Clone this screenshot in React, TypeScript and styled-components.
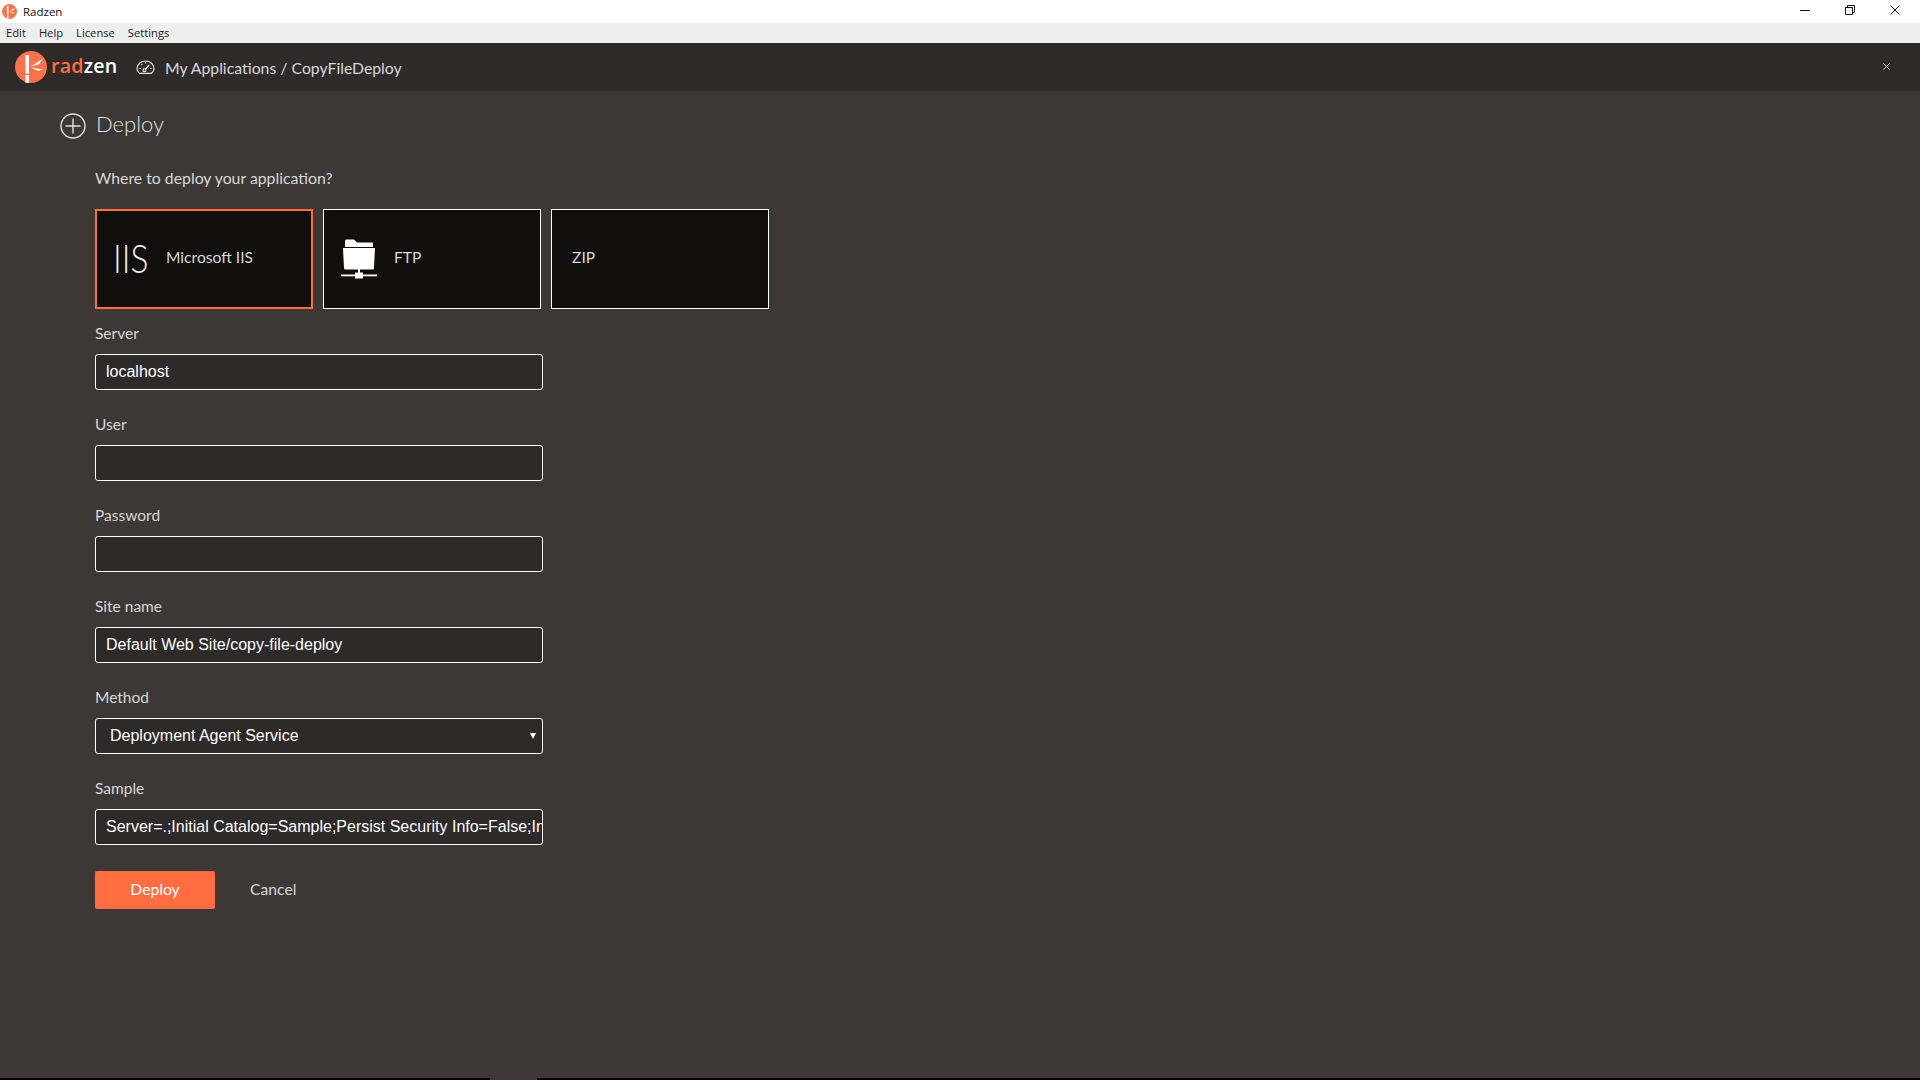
import React from "react";
import styled, { createGlobalStyle } from "styled-components";

const GlobalStyle = createGlobalStyle`
  html, body { margin: 0; padding: 0; height: 100%; background: #3d3735; }
  * { box-sizing: border-box; }
`;

const Shell = styled.div`
  width: 1920px;
  height: 1080px;
  display: flex;
  flex-direction: column;
  overflow: hidden;
  background: #3d3735;
  font-family: Lato, "Open Sans", sans-serif;
`;

const TitleBar = styled.div`
  height: 23px;
  flex: none;
  display: flex;
  align-items: center;
  padding-left: 2px;
  background: #fff;
  color: #111;
  font: 11.5px "Open Sans", sans-serif;
`;

const AppName = styled.span`
  margin-left: 6px;
`;

const WindowButtons = styled.div`
  margin-left: auto;
  margin-right: 3px;
  margin-bottom: 3px;
  display: flex;
`;

const WindowButton = styled.div`
  width: 45px;
  height: 20px;
  display: flex;
  align-items: center;
  justify-content: center;
`;

const MenuBar = styled.div`
  height: 20px;
  flex: none;
  display: flex;
  align-items: center;
  gap: 13px;
  padding: 0 0 2px 6px;
  background: #eeeeee;
  color: #222;
  font: 11.2px "Open Sans", sans-serif;
`;

const Header = styled.div`
  height: 48px;
  flex: none;
  display: flex;
  align-items: center;
  padding: 0 0 0 15px;
  background: #2e2a2a;
`;

const LogoWord = styled.div`
  margin-left: 4px;
  padding-bottom: 2px;
  font: 600 19.6px/1 "Open Sans", sans-serif;
  letter-spacing: 0.2px;
  color: #fff;
  width: 85px;
`;

const LogoAccent = styled.span`
  color: #ff6d41;
`;

const Breadcrumb = styled.div`
  margin-left: 10px;
  color: #d8d8d8;
  font-size: 15.8px;
`;

const HeaderClose = styled.div`
  margin-left: auto;
  margin-right: 30px;
  margin-bottom: 2px;
  display: flex;
`;

const Main = styled.div`
  flex: 1;
  display: flex;
  flex-direction: column;
  padding: 21px 0 0 60px;
  color: #d8d8d8;
`;

const PageTitle = styled.div`
  display: flex;
  align-items: center;
  gap: 10px;
  height: 28px;
  font-size: 22px;
  line-height: 24px;
  font-weight: 300;
  color: #e2e2e2;
`;

const TitleText = styled.span`
  margin-top: -5px;
`;

const Content = styled.div`
  padding-left: 35px;
`;

const Question = styled.div`
  margin-top: 28px;
  font-size: 15.8px;
  line-height: 20px;
`;

const Targets = styled.div`
  display: flex;
  gap: 10px;
  margin-top: 21px;
`;

const Target = styled.div<{ $active?: boolean; $plain?: boolean }>`
  width: 218px;
  height: 100px;
  display: flex;
  align-items: center;
  gap: 17px;
  padding-left: ${(p) => (p.$active ? "16px" : p.$plain ? "20px" : "18px")};
  padding-bottom: 5px;
  background: #100f0e;
  border: ${(p) => (p.$active ? "2px solid #ff6d41" : "1px solid #fff")};
  color: #d8d8d8;
  font-size: 15.6px;
`;

const IisMark = styled.span`
  display: block;
  width: 36px;
  margin-top: 3px;
  font: 300 39px/1 Lato, sans-serif;
  color: #eee;
  transform: scaleX(0.86);
  transform-origin: left center;
  white-space: nowrap;
`;

const Field = styled.div`
  display: flex;
  flex-direction: column;
  width: 448px;
  margin-top: 14px;
  & + & {
    margin-top: 24px;
  }
`;

const FieldLabel = styled.label`
  font-size: 15.5px;
  line-height: 20px;
  margin-bottom: 11px;
`;

const TextInput = styled.input`
  width: 448px;
  height: 36px;
  padding: 0 0 0 10px;
  border: 1px solid #fff;
  border-radius: 3px;
  background: #2e2a2a;
  color: #fff;
  font: 16px "Liberation Sans", Arial, sans-serif;
  outline: none;
`;

const SelectBox = styled.div`
  position: relative;
  height: 36px;
  display: flex;
  align-items: center;
  padding-left: 14px;
  border: 1px solid #fff;
  border-radius: 3px;
  background: #2e2a2a;
  color: #fff;
  font: 16px "Liberation Sans", Arial, sans-serif;
`;

const Caret = styled.span`
  position: absolute;
  right: 6px;
  top: 14px;
  width: 0;
  height: 0;
  border-left: 3px solid transparent;
  border-right: 3px solid transparent;
  border-top: 6px solid #fff;
`;

const Actions = styled.div`
  display: flex;
  align-items: center;
  margin-top: 26px;
`;

const PrimaryButton = styled.button`
  width: 120px;
  height: 38px;
  padding: 0 0 2px;
  border: none;
  border-radius: 2px;
  background: #ff6d41;
  color: #fff;
  font: 15.7px Lato, sans-serif;
`;

const LinkButton = styled.button`
  margin-left: 35px;
  padding: 0 0 2px;
  border: none;
  background: none;
  color: #d8d8d8;
  font: 15.7px Lato, sans-serif;
`;

const BottomEdge = styled.div`
  height: 2px;
  flex: none;
  display: flex;
`;

const EdgeSegment = styled.div<{ $width?: number }>`
  background: #050505;
  flex: ${(p) => (p.$width ? `0 0 ${p.$width}px` : "1")};
`;

const EdgeGap = styled.div`
  flex: 0 0 47px;
  background: #3d3735;
`;

function RadzenMark({ size }: { size: number }) {
  return (
    <svg width={size} height={size} viewBox="0 0 32 32" style={{ flex: "none" }}>
      <circle cx="16" cy="16" r="16" fill="#ff7148" />
      <rect x="10.4" y="4" width="3.6" height="18.6" fill="#fff" />
      <rect x="10.4" y="24" width="3.6" height="7.8" fill="#fff" />
      <path d="M15.8 15.6 L28 7.6 L24 13.2 Z" fill="#fff" />
      <path d="M15.8 16.4 L28 18.4 L23 20 Z" fill="#fff" />
    </svg>
  );
}

function Gauge() {
  return (
    <svg width="19" height="17" viewBox="0 0 19 17" fill="none" stroke="#e8e8e8" strokeWidth="1.2" style={{ flex: "none" }}>
      <path d="M3.6 14.4 H5.6 M13.4 14.4 H15.4 Q18 12.5 18 9.5 A8.5 7.5 0 0 0 1 9.5 Q1 12.5 3.6 14.4 Z" strokeLinejoin="round" />
      <circle cx="8.5" cy="11.2" r="1.5" />
      <path d="M9.6 10 L13.2 6 M3.4 9.5 H4.8 M5.2 5.2 L6.2 6.2 M9.5 3 V4.4 M14.2 9.5 H15.6" />
    </svg>
  );
}

function PlusCircle() {
  return (
    <svg width="26" height="26" viewBox="0 0 26 26" fill="none" stroke="#e2e2e2" strokeWidth="1.4">
      <circle cx="13" cy="13" r="12" />
      <path d="M13 5.5 V20.5 M5.5 13 H20.5" />
    </svg>
  );
}

function FtpFolder() {
  return (
    <svg width="36" height="42" viewBox="0 0 36 42" style={{ flex: "none", marginLeft: -1, marginTop: 7 }}>
      <path d="M4 5 V2 Q4 0.5 5.5 0.5 H13 L16 3.5 H32 V8 H4 Z" fill="#fff" />
      <path d="M2 9 H34 L33 29 Q33 30.5 31.5 30.5 H4.5 Q3 30.5 3 29 Z" fill="#fff" />
      <rect x="17" y="30" width="2" height="4" fill="#fff" />
      <rect x="14" y="33.5" width="8" height="6" fill="#fff" />
      <rect x="0" y="35.5" width="36" height="1.8" fill="#fff" />
    </svg>
  );
}

function CloseGlyph({ size, color, width }: { size: number; color: string; width: number }) {
  return (
    <svg width={size} height={size} viewBox="0 0 10 10" stroke={color} strokeWidth={width} fill="none">
      <path d="M0.5 0.5 L9.5 9.5 M9.5 0.5 L0.5 9.5" />
    </svg>
  );
}

const fields = [
  { label: "Server", value: "localhost" },
  { label: "User", value: "" },
  { label: "Password", value: "" },
  { label: "Site name", value: "Default Web Site/copy-file-deploy" },
];

export default function App() {
  return (
    <Shell>
      <GlobalStyle />
      <TitleBar>
        <RadzenMark size={15} />
        <AppName>Radzen</AppName>
        <WindowButtons>
          <WindowButton>
            <svg width="10" height="1"><rect width="10" height="1" fill="#111" /></svg>
          </WindowButton>
          <WindowButton>
            <svg width="10" height="10" fill="none" stroke="#111">
              <path d="M0.5 2.5 H7.5 V9.5 H0.5 Z M2.5 2.5 V0.5 H9.5 V7.5 H7.5" />
            </svg>
          </WindowButton>
          <WindowButton>
            <CloseGlyph size={10} color="#111" width={1} />
          </WindowButton>
        </WindowButtons>
      </TitleBar>
      <MenuBar>
        <span>Edit</span>
        <span>Help</span>
        <span>License</span>
        <span>Settings</span>
      </MenuBar>
      <Header>
        <RadzenMark size={32} />
        <LogoWord>
          <LogoAccent>rad</LogoAccent>zen
        </LogoWord>
        <Gauge />
        <Breadcrumb>My Applications / CopyFileDeploy</Breadcrumb>
        <HeaderClose>
          <CloseGlyph size={7} color="#e8e8e8" width={1.2} />
        </HeaderClose>
      </Header>
      <Main>
        <PageTitle>
          <PlusCircle />
          <TitleText>Deploy</TitleText>
        </PageTitle>
        <Content>
          <Question>Where to deploy your application?</Question>
          <Targets>
            <Target $active>
              <IisMark>IIS</IisMark>
              Microsoft IIS
            </Target>
            <Target>
              <FtpFolder />
              FTP
            </Target>
            <Target $plain>ZIP</Target>
          </Targets>
          {fields.map((f) => (
            <Field key={f.label}>
              <FieldLabel>{f.label}</FieldLabel>
              <TextInput readOnly value={f.value} />
            </Field>
          ))}
          <Field>
            <FieldLabel>Method</FieldLabel>
            <SelectBox>
              Deployment Agent Service
              <Caret />
            </SelectBox>
          </Field>
          <Field>
            <FieldLabel>Sample</FieldLabel>
            <TextInput readOnly value="Server=.;Initial Catalog=Sample;Persist Security Info=False;Integrated Security=True" />
          </Field>
          <Actions>
            <PrimaryButton>Deploy</PrimaryButton>
            <LinkButton>Cancel</LinkButton>
          </Actions>
        </Content>
      </Main>
      <BottomEdge>
        <EdgeSegment $width={490} />
        <EdgeGap />
        <EdgeSegment />
      </BottomEdge>
    </Shell>
  );
}
